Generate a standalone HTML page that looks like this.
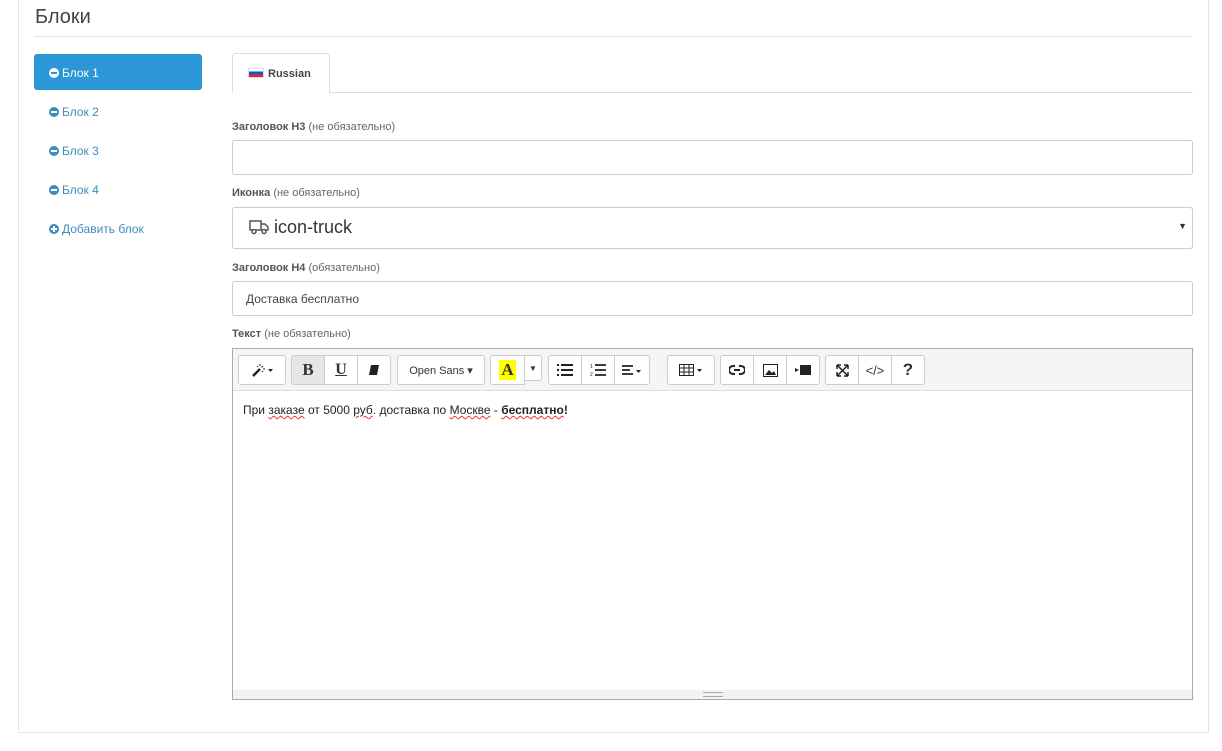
<!DOCTYPE html><html><head><meta charset="utf-8"><style>
*{box-sizing:border-box}body{margin:0;width:1222px;height:751px;background:#fff;font-family:"Liberation Sans",sans-serif;color:#555;position:relative;overflow:hidden}
.panel{position:absolute;left:18px;top:-2px;width:1191px;height:735px;border:1px solid #e6e6e6;border-top:none;background:#fff}
.abs{position:absolute}
h2{position:absolute;left:35px;top:6px;margin:0;font-weight:normal;font-size:20px;color:#444}
.hr{left:34px;top:36px;width:1158px;height:1px;background:#e5e5e5}
.nav{left:34px;width:168px;height:36px;font-size:12px;color:#3c8dbc;padding:12px 0 0 15px}
.nav.act{background:#2b97d6;color:#fff;border-radius:3px}
.dot{display:inline-block;width:10px;height:10px;border-radius:50%;background:currentColor;vertical-align:-1px;margin-right:3px;position:relative}
.dot:after{content:"";position:absolute;left:2px;top:4px;width:6px;height:2px;background:#fff}
.act .dot:after{background:#2b97d6}
.plus:before{content:"";position:absolute;left:4px;top:2px;width:2px;height:6px;background:#fff}
.lbl{left:232px;font-size:11px;color:#666}.lbl b{color:#555}
.inp{left:232px;width:961px;border:1px solid #ccc;border-radius:3px;background:#fff}
.btn{position:absolute;top:6px;height:30px;border:1px solid #ccc;border-radius:3px;background:#fff;font-size:14px;color:#333;display:flex;align-items:center;justify-content:center}
.g{position:absolute;top:6px;height:30px;display:flex}
.g .b{height:30px;border:1px solid #ccc;margin-left:-1px;background:#fff;display:flex;align-items:center;justify-content:center;font-size:14px;color:#333}
.g .b:first-child{border-radius:3px 0 0 3px;margin-left:0}.g .b:last-child{border-radius:0 3px 3px 0}
u.sp{text-decoration:underline wavy #e33;text-decoration-thickness:1px}
svg{display:block}
</style></head><body>
<div class="panel"></div>
<h2>Блоки</h2>
<div class="abs hr"></div>
<div class="abs nav act" style="top:54px"><span class="dot"></span>Блок 1</div>
<div class="abs nav" style="top:93px"><span class="dot"></span>Блок 2</div>
<div class="abs nav" style="top:132px"><span class="dot"></span>Блок 3</div>
<div class="abs nav" style="top:171px"><span class="dot"></span>Блок 4</div>
<div class="abs nav" style="top:210px"><span class="dot plus"></span>Добавить блок</div>
<div class="abs" style="left:232px;top:92px;width:961px;height:1px;background:#ddd"></div>
<div class="abs" style="left:232px;top:53px;width:98px;height:40px;border:1px solid #ddd;border-bottom:none;background:#fff;border-radius:3px 3px 0 0;font-size:11px;font-weight:bold;color:#444;padding:14px 0 0 15px"><span style="display:inline-block;width:16px;height:10px;background:linear-gradient(#fff 33%,#1a4fd6 33% 66%,#e02a2a 66%);vertical-align:-1px;margin-right:4px;border:1px solid #ddd"></span>Russian</div>
<div class="abs lbl" style="top:121px"><b>Заголовок H3</b> (не обязательно)</div>
<div class="abs inp" style="top:140px;height:35px"></div>
<div class="abs lbl" style="top:187px"><b>Иконка</b> (не обязательно)</div>
<div class="abs inp" style="top:207px;height:42px;font-size:18px;color:#333;padding:9px 0 0 16px"><svg width="20" height="16" viewBox="0 0 20 16" style="display:inline-block;vertical-align:-2px"><path d="M1 2h11v9H1zM12 5h4l3 3v3h-7" fill="none" stroke="#555" stroke-width="1.5"/><circle cx="5" cy="12.5" r="2" fill="#fff" stroke="#555" stroke-width="1.5"/><circle cx="15" cy="12.5" r="2" fill="#fff" stroke="#555" stroke-width="1.5"/></svg> icon-truck<span style="position:absolute;right:5px;top:13px;font-size:9px">▼</span></div>
<div class="abs lbl" style="top:262px"><b>Заголовок H4</b> (обязательно)</div>
<div class="abs inp" style="top:281px;height:35px;font-size:12px;color:#444;padding:10px 0 0 13px">Доставка бесплатно</div>
<div class="abs lbl" style="top:328px"><b>Текст</b> (не обязательно)</div>
<div class="abs" style="left:232px;top:348px;width:961px;height:352px;border:1px solid #aaa;background:#fff">
<div style="height:42px;background:#f5f5f5;border-bottom:1px solid #ddd;position:relative">
<div class="btn" style="left:5px;width:48px"><svg width="22" height="14" viewBox="0 0 22 14"><path d="M2 13L9 6" stroke="#222" stroke-width="2.5"/><path d="M9 1v2M12 3l-1.5 1.5M14 6h-2M6 3L7 4M12 9l-1-1" stroke="#222" stroke-width="1"/><path d="M17 6l2.5 3l2.5-3z" fill="#222"/></svg></div>
<div class="g" style="left:58px"><div class="b" style="width:34px;background:#e6e6e6;font-family:'Liberation Serif';font-weight:bold;font-size:17px">B</div><div class="b" style="width:34px;font-family:'Liberation Serif';font-weight:bold;text-decoration:underline;font-size:16px">U</div><div class="b" style="width:34px"><svg width="12" height="12"><path d="M3 1h8l-2 10H1z" fill="#222"/></svg></div></div>
<div class="btn" style="left:164px;width:88px;font-size:11px">Open Sans ▾</div>
<div class="g" style="left:257px"><div class="b" style="width:35px"><span style="background:#ff0;font-family:'Liberation Serif';font-weight:bold;font-size:17px;padding:0 2px">A</span></div><div class="b" style="width:18px;height:26px;font-size:8px">▼</div></div>
<div class="g" style="left:315px"><div class="b" style="width:34px"><svg width="16" height="12"><path d="M0 1h2M0 6h2M0 11h2M4 1h12M4 6h12M4 11h12" stroke="#222" stroke-width="2"/></svg></div><div class="b" style="width:34px"><svg width="16" height="14"><text x="0" y="5" font-size="5" fill="#222">1</text><text x="0" y="13" font-size="5" fill="#222">2</text><path d="M5 2h11M5 7h11M5 12h11" stroke="#222" stroke-width="1.8"/></svg></div><div class="b" style="width:36px"><svg width="20" height="12"><path d="M0 2h11M0 6h8M0 10h11" stroke="#222" stroke-width="1.8"/><path d="M14 6l2.5 3l2.5-3z" fill="#222"/></svg></div></div>
<div class="btn" style="left:434px;width:48px"><svg width="24" height="12"><path d="M0.5 0.5h14v11h-14zM0.5 4h14M0.5 8h14M5 .5v11M10 .5v11" fill="none" stroke="#222"/><path d="M18 5l2.5 3l2.5-3z" fill="#222"/></svg></div>
<div class="g" style="left:487px"><div class="b" style="width:34px"><svg width="16" height="10"><path d="M6 1H4a4 4 0 0 0 0 8h2M10 1h2a4 4 0 0 1 0 8h-2M5 5h6" fill="none" stroke="#222" stroke-width="2"/></svg></div><div class="b" style="width:34px"><svg width="15" height="13"><rect x=".5" y=".5" width="14" height="12" fill="none" stroke="#222"/><path d="M2 11l4-5l3 3l2-2l2 4z" fill="#222"/></svg></div><div class="b" style="width:34px"><svg width="16" height="10"><path d="M0 3l4 2l-4 2z" fill="#222"/><rect x="5" y="0" width="11" height="10" fill="#222"/></svg></div></div>
<div class="g" style="left:592px"><div class="b" style="width:34px"><svg width="13" height="13"><path d="M1 1l11 11M12 1L1 12M1 1h4M1 1v4M12 1h-4M12 1v4M1 12h4M1 12v-4M12 12h-4M12 12v-4" stroke="#222" stroke-width="1.5" fill="none"/></svg></div><div class="b" style="width:34px;font-size:13px">&lt;/&gt;</div><div class="b" style="width:34px;font-weight:bold;font-size:17px">?</div></div>
</div>
<div style="padding:12px 10px;font-size:12px;color:#222">При <u class="sp">заказе</u> от 5000 <u class="sp">руб</u>. доставка по <u class="sp">Москве</u> - <b><u class="sp">бесплатно</u>!</b></div>
<div style="position:absolute;left:0;right:0;bottom:0;height:9px;background:#f2f2f2"><div style="position:absolute;left:470px;top:2px;width:20px;height:5px;border-top:1px solid #aaa;border-bottom:1px solid #aaa"></div></div>
</div>
</body></html>
